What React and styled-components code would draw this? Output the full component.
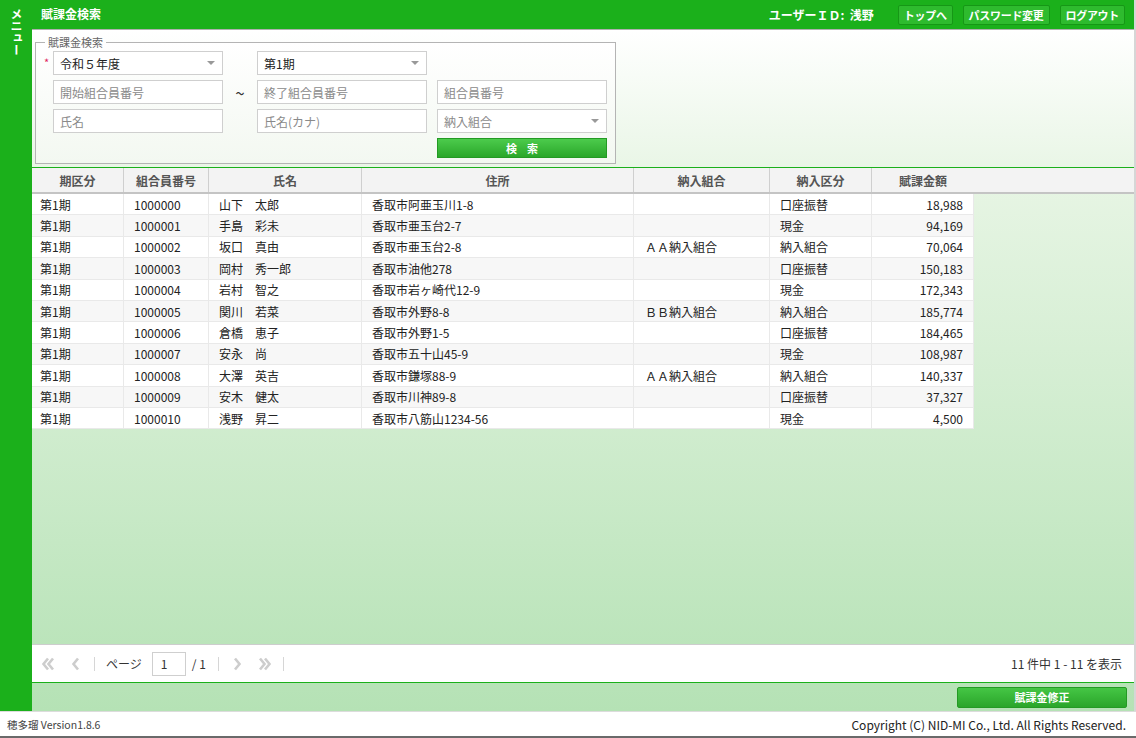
import React from 'react';
import styled, { createGlobalStyle } from 'styled-components';

const GlobalStyle = createGlobalStyle`
  html, body {
    margin: 0;
    padding: 0;
    font-family: "Noto Sans CJK JP", "DejaVu Sans", sans-serif;
    font-size: 12px;
    color: #333;
  }
`;

const GREEN = '#1bb01b';

const Page = styled.div`
  display: flex;
  flex-direction: column;
  width: 1136px;
  height: 738px;
  overflow: hidden;
`;

const Body = styled.div`
  flex: 1;
  display: flex;
  min-height: 0;
`;

const Sidebar = styled.div`
  width: 32px;
  background: ${GREEN};
  color: #fff;
  display: flex;
  justify-content: center;
  padding-top: 8px;
  box-sizing: border-box;
`;

const SideLabel = styled.div`
  writing-mode: vertical-rl;
  font-weight: bold;
  font-size: 12px;
  line-height: 12px;
`;

const Main = styled.div`
  flex: 1;
  display: flex;
  flex-direction: column;
  border-right: 2px solid #d6d6d6;
`;

const Header = styled.div`
  height: 30px;
  background: ${GREEN};
  display: flex;
  align-items: center;
  padding: 0 9px;
  border-bottom: 1px solid #b0b0b0;
  box-sizing: border-box;
  color: #fff;
  font-weight: bold;
`;

const Title = styled.div`
  flex: 1;
  font-size: 12px;
  margin-top: -2px;
`;

const UserId = styled.div`
  font-size: 12px;
  margin-right: 14px;
`;

const HeadButton = styled.button`
  height: 20px;
  padding: 0 5px;
  margin-left: 10px;
  background: #2ebb2e;
  border: 1px solid #169716;
  border-radius: 2px;
  color: #fff;
  font: bold 11px "Noto Sans CJK JP", sans-serif;
  line-height: 18px;
  letter-spacing: -0.3px;
`;

const Content = styled.div`
  flex: 1;
  display: flex;
  flex-direction: column;
  background: linear-gradient(#ffffff 0%, #e7f5e4 22%, #b5e2b5 100%);
`;

const SearchWrap = styled.div`
  padding: 7px 0 3px 3px;
`;

const Fieldset = styled.fieldset`
  width: 579px;
  box-sizing: border-box;
  margin: 0;
  border: 1px solid #b4b4b4;
  padding: 3px 8px 1px 17px;
  background: linear-gradient(#ffffff, #f3f8f1);
`;

const Legend = styled.legend`
  font-size: 11px;
  color: #666;
  padding: 0 3px;
  margin-left: -8px;
  line-height: 11px;
`;

const FormGrid = styled.div`
  display: grid;
  grid-template-columns: 170px 34px 170px 10px 170px;
  grid-auto-rows: 24px;
  row-gap: 5px;
  position: relative;
`;

const Required = styled.span`
  position: absolute;
  left: -9px;
  top: 3px;
  color: #e0245e;
  font-size: 11px;
`;

const Field = styled.div`
  grid-column: ${p => p.col};
  box-sizing: border-box;
  border: 1px solid #cfcfcf;
  background: #fff;
  display: flex;
  align-items: center;
  padding: 0 6px;
  color: ${p => (p.$ph ? '#8a8a8a' : '#222')};
  font-size: 12px;
  justify-content: space-between;
`;

const Arrow = styled.span`
  width: 0;
  height: 0;
  border-left: 4px solid transparent;
  border-right: 4px solid transparent;
  border-top: 4px solid #999;
  margin-right: 1px;
`;

const Tilde = styled.div`
  grid-column: 2;
  display: flex;
  align-items: center;
  justify-content: center;
  font-size: 17px;
  color: #333;
`;

const SearchButton = styled.button`
  grid-column: 5;
  height: 20px;
  background: linear-gradient(#4ccb4c, #2aa72a);
  border: 1px solid #239a23;
  color: #fff;
  font: bold 11px "Noto Sans CJK JP", sans-serif;
  letter-spacing: 10px;
  padding: 0 0 0 10px;
`;

const Table = styled.div`
  border-top: 1px solid ${GREEN};
`;

const HeadRow = styled.div`
  display: grid;
  grid-template-columns: 92px 85px 153px 272px 136px 102px 102px 1fr;
  height: 24px;
  background: #f3f3f3;
  border-bottom: 2px solid #c4c4c4;
`;

const HeadCell = styled.div`
  display: flex;
  align-items: center;
  justify-content: center;
  color: #555;
  font-weight: bold;
  font-size: 12px;
  border-right: ${p => (p.$last ? 'none' : '1px solid #cfcfcf')};
`;

const DataRow = styled.div`
  display: grid;
  grid-template-columns: 92px 85px 153px 272px 136px 102px 102px;
  width: 942px;
  height: 21.4px;
  background: ${p => (p.$alt ? '#f7f7f7' : '#ffffff')};
`;

const Cell = styled.div`
  box-sizing: border-box;
  display: flex;
  align-items: center;
  justify-content: ${p => (p.$right ? 'flex-end' : 'flex-start')};
  padding: ${p => (p.$right ? '0 10px 0 0' : `0 0 0 ${p.$pad || 10}px`)};
  border-right: 1px solid #e9e9e9;
  border-bottom: 1px solid #e9e9e9;
  font-size: 12px;
  color: #222;
  white-space: pre;
`;

const Spacer = styled.div`
  flex: 1;
`;

const Pager = styled.div`
  height: 37px;
  background: #fff;
  border-top: 1px solid #cdcdcd;
  border-bottom: 1px solid ${GREEN};
  display: flex;
  align-items: center;
  padding: 0 12px 0 9px;
  font-size: 12px;
  color: #333;
`;

const PageIcon = styled.svg`
  width: ${p => (p.$double ? 14 : 9)}px;
  height: 14px;
  margin-right: ${p => p.$mr || 0}px;
  margin-left: ${p => p.$ml || 0}px;
  flex-shrink: 0;
`;

const Sep = styled.span`
  width: 1px;
  height: 14px;
  background: #d6d6d6;
  margin-left: ${p => p.$ml || 0}px;
  margin-right: ${p => p.$mr || 0}px;
`;

const PageInput = styled.div`
  width: 34px;
  height: 24px;
  box-sizing: border-box;
  border: 1px solid #cfcfcf;
  display: flex;
  align-items: center;
  padding-left: 8px;
  margin: 0 6px 0 10px;
`;

const PagerInfo = styled.div`
  margin-left: auto;
`;

const ActionBar = styled.div`
  height: 28px;
  display: flex;
  align-items: center;
  justify-content: flex-end;
  padding-right: 7px;
`;

const ActionButton = styled.button`
  width: 170px;
  height: 21px;
  background: linear-gradient(#45c645, #2aa52a);
  border: 1px solid #249a24;
  border-radius: 2px;
  color: #fff;
  font: bold 11px "Noto Sans CJK JP", sans-serif;
`;

const Footer = styled.div`
  height: 27px;
  background: #fff;
  border-top: 1px solid #dcdcdc;
  border-bottom: 2px solid #6a6a6a;
  box-sizing: border-box;
  display: flex;
  align-items: center;
  justify-content: space-between;
  padding: 0 10px 0 7px;
  font-size: 10.5px;
  color: #444;
`;

const Copyright = styled.span`
  font-size: 12px;
  color: #222;
`;

const Chevron = ({ dir, double, ...rest }) => {
  const one = dir === 'left' ? 'M7 1.5 L2.5 7 L7 12.5' : 'M2 1.5 L6.5 7 L2 12.5';
  const two = dir === 'left' ? 'M12 1.5 L7.5 7 L12 12.5' : 'M7 1.5 L11.5 7 L7 12.5';
  return (
    <PageIcon $double={double} viewBox={double ? '0 0 14 14' : '0 0 9 14'} {...rest}>
      <path d={one} fill="none" stroke="#cdcdcd" strokeWidth="2.6" />
      {double && <path d={two} fill="none" stroke="#cdcdcd" strokeWidth="2.6" />}
    </PageIcon>
  );
};

const headers = ['期区分', '組合員番号', '氏名', '住所', '納入組合', '納入区分', '賦課金額'];

const rows = [
  ['1000000', '山下　太郎', '香取市阿亜玉川1-8', '', '口座振替', '18,988'],
  ['1000001', '手島　彩未', '香取市亜玉台2-7', '', '現金', '94,169'],
  ['1000002', '坂口　真由', '香取市亜玉台2-8', 'ＡＡ納入組合', '納入組合', '70,064'],
  ['1000003', '岡村　秀一郎', '香取市油他278', '', '口座振替', '150,183'],
  ['1000004', '岩村　智之', '香取市岩ヶ崎代12-9', '', '現金', '172,343'],
  ['1000005', '関川　若菜', '香取市外野8-8', 'ＢＢ納入組合', '納入組合', '185,774'],
  ['1000006', '倉橋　恵子', '香取市外野1-5', '', '口座振替', '184,465'],
  ['1000007', '安永　尚', '香取市五十山45-9', '', '現金', '108,987'],
  ['1000008', '大澤　英吉', '香取市鎌塚88-9', 'ＡＡ納入組合', '納入組合', '140,337'],
  ['1000009', '安木　健太', '香取市川神89-8', '', '口座振替', '37,327'],
  ['1000010', '浅野　昇二', '香取市八筋山1234-56', '', '現金', '4,500'],
];

export default function App() {
  return (
    <>
      <GlobalStyle />
      <Page>
        <Body>
          <Sidebar>
            <SideLabel>メニュー</SideLabel>
          </Sidebar>
          <Main>
            <Header>
              <Title>賦課金検索</Title>
              <UserId>ユーザーＩＤ:&nbsp;&nbsp;浅野</UserId>
              <HeadButton>トップへ</HeadButton>
              <HeadButton>パスワード変更</HeadButton>
              <HeadButton>ログアウト</HeadButton>
            </Header>
            <Content>
              <SearchWrap>
                <Fieldset>
                  <Legend>賦課金検索</Legend>
                  <FormGrid>
                    <Required>*</Required>
                    <Field col={1}>令和５年度<Arrow /></Field>
                    <Field col={3}>第1期<Arrow /></Field>
                    <Field col={1} $ph>開始組合員番号</Field>
                    <Tilde>~</Tilde>
                    <Field col={3} $ph>終了組合員番号</Field>
                    <Field col={5} $ph>組合員番号</Field>
                    <Field col={1} $ph>氏名</Field>
                    <Field col={3} $ph>氏名(カナ)</Field>
                    <Field col={5} $ph>納入組合<Arrow /></Field>
                    <SearchButton>検索</SearchButton>
                  </FormGrid>
                </Fieldset>
              </SearchWrap>
              <Table>
                <HeadRow>
                  {headers.map((h, i) => (
                    <HeadCell key={h} $last={i === headers.length - 1}>{h}</HeadCell>
                  ))}
                  <HeadCell $last />
                </HeadRow>
                {rows.map((r, i) => (
                  <DataRow key={r[0]} $alt={i % 2 === 1}>
                    <Cell $pad={8}>第1期</Cell>
                    <Cell>{r[0]}</Cell>
                    <Cell>{r[1]}</Cell>
                    <Cell>{r[2]}</Cell>
                    <Cell $pad={11}>{r[3]}</Cell>
                    <Cell>{r[4]}</Cell>
                    <Cell $right>{r[5]}</Cell>
                  </DataRow>
                ))}
              </Table>
              <Spacer />
              <Pager>
                <Chevron dir="left" double $mr={16} />
                <Chevron dir="left" $mr={14} />
                <Sep $mr={11} />
                <span>ページ</span>
                <PageInput>1</PageInput>
                <span>/ 1</span>
                <Sep $ml={12} $mr={14} />
                <Chevron dir="right" $mr={16} />
                <Chevron dir="right" double $mr={11} />
                <Sep />
                <PagerInfo>11 件中 1 - 11 を表示</PagerInfo>
              </Pager>
              <ActionBar>
                <ActionButton>賦課金修正</ActionButton>
              </ActionBar>
            </Content>
          </Main>
        </Body>
        <Footer>
          <span>穂多瑠 Version1.8.6</span>
          <Copyright>Copyright (C) NID-MI Co., Ltd. All Rights Reserved.</Copyright>
        </Footer>
      </Page>
    </>
  );
}
